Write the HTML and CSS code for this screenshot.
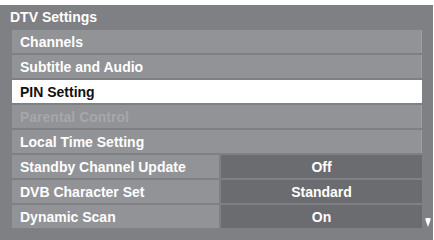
FILE: index.html
```html
<!DOCTYPE html>
<html>
<head>
<meta charset="utf-8">
<link rel="stylesheet" href="styles.css">
</head>
<body>
<div class="panel">
  <div class="title">DTV Settings</div>
  <div class="body">
    <div class="list">
      <div class="row"><span class="label">Channels</span></div>
      <div class="row"><span class="label">Subtitle and Audio</span></div>
      <div class="row selected"><span class="label">PIN Setting</span></div>
      <div class="row disabled"><span class="label">Parental Control</span></div>
      <div class="row"><span class="label">Local Time Setting</span></div>
      <div class="row split"><span class="label">Standby Channel Update</span><span class="value">Off</span></div>
      <div class="row split"><span class="label">DVB Character Set</span><span class="value">Standard</span></div>
      <div class="row split"><span class="label">Dynamic Scan</span><span class="value">On</span></div>
    </div>
    <div class="scroll">
      <svg width="6" height="9" viewBox="0 0 6 9"><polygon points="0.5,0 5.5,0 5.5,2 3,9 0.5,2" fill="#fff"/></svg>
    </div>
  </div>
</div>
</body>
</html>
```
FILE: styles.css
```css
html, body {
  margin: 0;
  padding: 0;
  background: #ffffff;
}
body {
  font-family: "Liberation Sans", Arial, sans-serif;
  font-weight: bold;
  color: #ffffff;
}
.panel {
  margin-top: 5px;
  width: 433px;
  height: 235px;
  background: #7f8084;
  box-sizing: border-box;
}
.title {
  height: 25px;
  line-height: 24px;
  padding-left: 10px;
  font-size: 14px;
}
.body {
  display: flex;
  padding-left: 12px;
}
.list {
  width: 410px;
  display: flex;
  flex-direction: column;
  gap: 2px;
}
.row {
  height: 23px;
  display: flex;
  align-items: center;
  background: #929397;
  border-right: 1px solid #a0a1a4;
  box-sizing: border-box;
  font-size: 14px;
}
.row .label {
  padding-left: 8px;
}
.row.selected {
  background: #ffffff;
  color: #111111;
  border-right-color: #ffffff;
}
.row.disabled {
  color: #a6a7aa;
}
.row.split {
  background: #7f8084;
  border-right: none;
  gap: 2px;
  align-items: stretch;
}
.row.split .label {
  width: 207px;
  background: #929397;
  display: flex;
  align-items: center;
  box-sizing: border-box;
}
.row.split .value {
  flex: 1;
  background: #6b6c70;
  display: flex;
  align-items: center;
  justify-content: center;
}
.scroll {
  width: 11px;
  display: flex;
  align-items: flex-end;
  justify-content: center;
  padding-bottom: 1px;
}
.scroll svg {
  display: block;
}
```
